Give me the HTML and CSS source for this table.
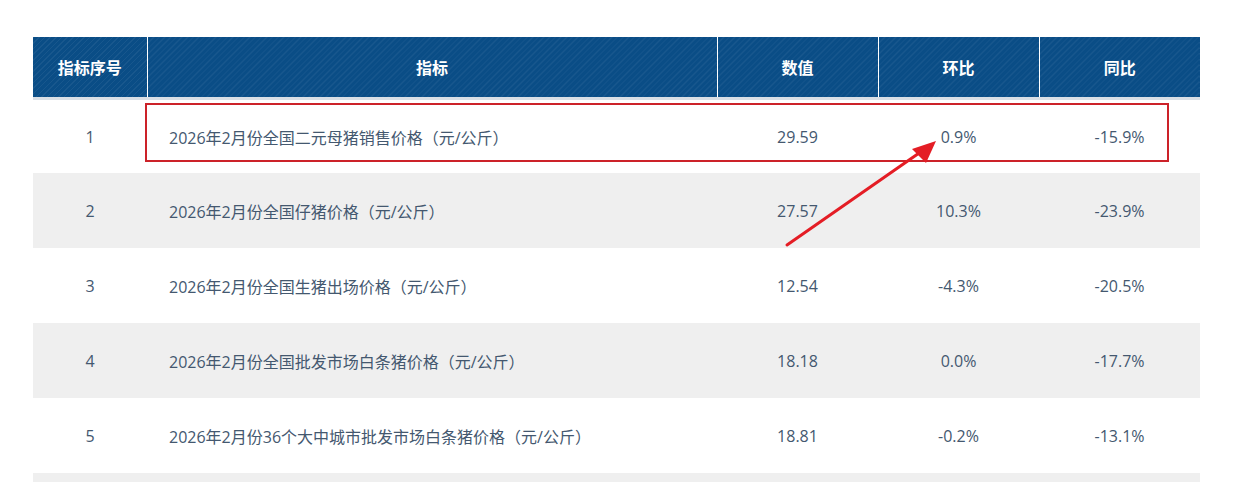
FILE: index.html
```html
<!DOCTYPE html>
<html lang="zh">
<head>
<meta charset="utf-8">
<link rel="stylesheet" href="styles.css">
</head>
<body>
<div class="page">
  <table class="data">
    <colgroup>
      <col class="c1"><col class="c2"><col class="c3"><col class="c4"><col class="c5">
    </colgroup>
    <thead>
      <tr><th>指标序号</th><th>指标</th><th>数值</th><th>环比</th><th>同比</th></tr>
    </thead>
    <tbody>
      <tr class="first"><td>1</td><td class="name">2026年2月份全国二元母猪销售价格（元/公斤）</td><td>29.59</td><td>0.9%</td><td>-15.9%</td></tr>
      <tr class="alt"><td>2</td><td class="name">2026年2月份全国仔猪价格（元/公斤）</td><td>27.57</td><td>10.3%</td><td>-23.9%</td></tr>
      <tr><td>3</td><td class="name">2026年2月份全国生猪出场价格（元/公斤）</td><td>12.54</td><td>-4.3%</td><td>-20.5%</td></tr>
      <tr class="alt"><td>4</td><td class="name">2026年2月份全国批发市场白条猪价格（元/公斤）</td><td>18.18</td><td>0.0%</td><td>-17.7%</td></tr>
      <tr><td>5</td><td class="name">2026年2月份36个大中城市批发市场白条猪价格（元/公斤）</td><td>18.81</td><td>-0.2%</td><td>-13.1%</td></tr>
      <tr class="alt"><td></td><td class="name"></td><td></td><td></td><td></td></tr>
    </tbody>
  </table>
  <div class="highlight"></div>
  <svg class="arrow" width="1234" height="482" viewBox="0 0 1234 482">
    <line x1="787" y1="245" x2="922" y2="151" stroke="#e41d25" stroke-width="3" stroke-linecap="round"/>
    <polygon points="936,141 912,149 926,163" fill="#e41d25"/>
  </svg>
</div>
</body>
</html>
```
FILE: styles.css
```css
html, body {
  margin: 0;
  padding: 0;
  background: #ffffff;
  overflow: hidden;
}
.page {
  position: relative;
  width: 1234px;
  height: 482px;
  padding: 37px 34px 0 33px;
  box-sizing: border-box;
  overflow: hidden;
}
.data {
  width: 1167px;
  border-collapse: collapse;
  table-layout: fixed;
  font-family: "Open Sans", "Noto Sans CJK SC", sans-serif;
  font-size: 16px;
  color: #44586f;
}
.c1 { width: 114px; }
.c2 { width: 570px; }
.c3 { width: 161px; }
.c4 { width: 161px; }
.c5 { width: 161px; }
.data th {
  height: 60px;
  padding: 0;
  color: #ffffff;
  font-family: "Noto Sans CJK SC", sans-serif;
  font-weight: 700;
  font-size: 16px;
  text-align: center;
  background-color: #0a4d86;
  background-image: repeating-linear-gradient(135deg, rgba(255,255,255,0.06) 0px, rgba(255,255,255,0.06) 1px, transparent 1px, transparent 4px);
  border-left: 1px solid #ffffff;
  border-bottom: 3px solid #d9dfe6;
}
.data th:first-child { border-left: none; }
.data td {
  height: 75px;
  padding: 0;
  text-align: center;
  vertical-align: middle;
}
.data tr.first td { height: 73px; }
.data td.name {
  text-align: left;
  padding-left: 22px;
}
.data tr.alt td { background: #efefef; }
.highlight {
  position: absolute;
  left: 145px;
  top: 103px;
  width: 1024px;
  height: 59px;
  border: 2px solid #cc2229;
  box-sizing: border-box;
}
.arrow {
  position: absolute;
  left: 0;
  top: 0;
}
```
